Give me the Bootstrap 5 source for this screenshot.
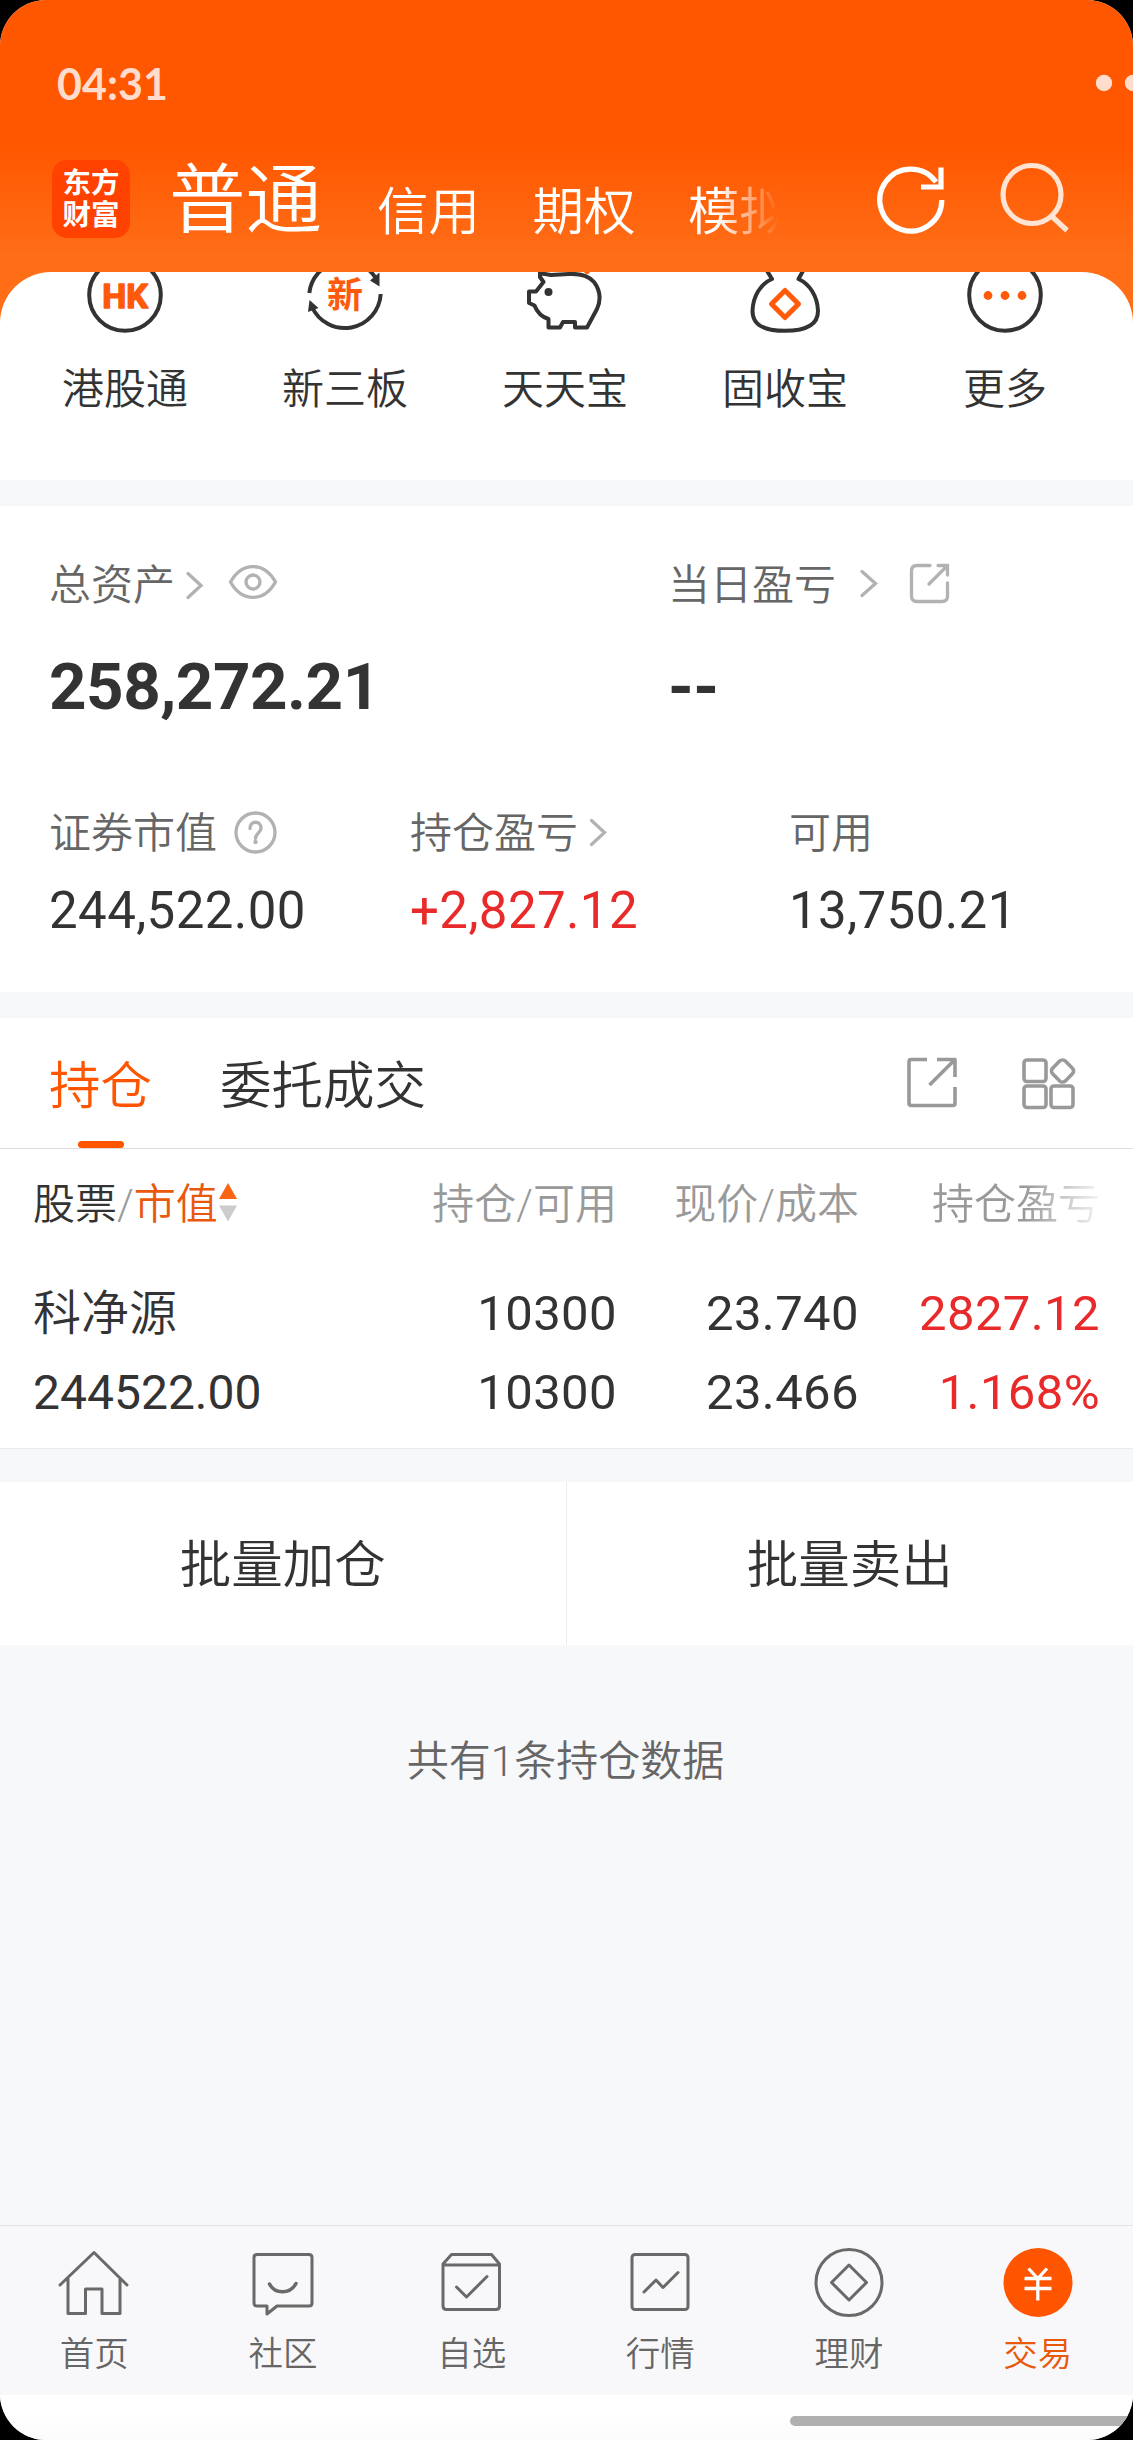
<!DOCTYPE html>
<html lang="zh-CN">
<head>
<meta charset="utf-8">
<meta name="viewport" content="width=device-width, initial-scale=1">
<title>东方财富 交易</title>
<link href="https://cdn.jsdelivr.net/npm/bootstrap@5.3.0/dist/css/bootstrap.min.css" rel="stylesheet">
<style>
  :root { --brand: #ff5500; --ink: #333; --sub: #666; --mute: #999; --up: #e92a2a; }
  html, body { background: #000; }
  body { font-family: Roboto, "Noto Sans CJK SC", sans-serif; font-weight: 350; color: var(--ink); line-height: 60px; margin: 0; }
  svg { display: block; flex: none; fill: none; overflow: visible; }
  .phone { width: 1133px; height: 2440px; border-radius: 46px; background: #f7f8fa; overflow: hidden; }
  .top-area { height: 322px; margin-bottom: -50px; flex: none; background: linear-gradient(#ff5700 0, #ff5700 145px, #ff6d17 255px, #ff6d17 100%); color: #fff; }
  .status { height: 147px; padding: 20px 0 0 57px; color: #ffdccc; }
  .clock { font: 700 43px/60px Lato, sans-serif; letter-spacing: 0; margin-top: 34px; }
  .title-row { height: 125px; padding-left: 52px; }
  .logo { width: 78px; height: 78px; margin-top: 13px; border-radius: 15px; background: #ff4200; font: 700 28.5px/32px "Noto Sans CJK SC", sans-serif; padding-top: 5px; }
  .t-main { font-size: 76.5px; line-height: 90px; margin: 9px 0 0 39px; width: 155px; }
  .t-list { width: 420px; margin: 36px 0 0 53px; font-size: 51.5px; gap: 52.5px; overflow: hidden; -webkit-mask-image: linear-gradient(90deg, #000 340px, transparent 402px); mask-image: linear-gradient(90deg, #000 340px, transparent 402px); }
  .panel { background: #fff; flex: none; }
  .quick { height: 208px; border-radius: 51px 51px 0 0; padding: 0 16px 0 15px; }
  .quick .item { width: 220px; font-size: 42px; }
  .quick .cap { margin-top: 25px; }
  .assets { height: 486px; margin-top: 26px; padding: 50px 0 0 49px; }
  .lab { font-size: 42px; color: var(--sub); }
  .lab svg { margin-left: -1px; }
  .big { font: 700 65.5px/80px Roboto, sans-serif; margin-top: 31px; margin-bottom: -1px; letter-spacing: -.5px; }
  .mid { font-size: 51px; font-weight: 400; margin-top: 17px; letter-spacing: .4px; }
  .w1 { width: 619px; } .w2 { width: 361px; } .w3 { width: 379px; }
  .holdings { height: 431px; margin-top: 26px; border-bottom: 1px solid #ebebeb; }
  .tabs { height: 131px; border-bottom: 1px solid #ddd; padding-left: 49px; font-size: 51.5px; }
  .tab-on { color: var(--brand); }
  .tab-on .bar { width: 46px; height: 7px; border-radius: 4px; background: var(--brand); }
  .thead-line { padding: 26px 0 0 33px; font-size: 42px; color: var(--mute); }
  .data-line { padding-left: 33px; font-size: 49px; font-weight: 400; }
  .c1 { width: 342px; } .c2 { width: 242px; text-align: right; } .c4 { width: 241px; text-align: right; }
  .data-line .c2, .data-line .c4 { letter-spacing: .4px; }
  .fade-end { -webkit-mask-image: linear-gradient(90deg, #000 165px, transparent 250px); mask-image: linear-gradient(90deg, #000 165px, transparent 250px); }
  .up { color: var(--up); }
  .batch { height: 163px; margin-top: 33px; font-size: 51.5px; }
  .batch > div { padding-top: 5px; }
  .batch > div:first-child { border-right: 1px solid #ebebeb; }
  .summary { font-size: 42px; color: var(--sub); margin-top: 87px; padding-right: 2px; }
  .tabbar { height: 170px; flex: none; border-top: 1px solid #e1e4e6; background: #f8f8fa; font-size: 34.5px; line-height: 40px; color: var(--sub); padding: 16px 1px 0 0; }
  .tabbar span { margin-top: 12px; }
  .tabbar svg { stroke: #696969; stroke-width: 3; stroke-linejoin: round; stroke-linecap: round; }
  .gesture { height: 45px; flex: none; background: linear-gradient(#fff 40%, #fbfbfb); padding: 21px 0 0 790px; }
  .gesture div { height: 10px; background: #b0b0b0; border-radius: 5px 0 0 5px; }
</style>
</head>
<body>
<div class="phone d-flex flex-column">
  <header class="top-area">
    <div class="status d-flex justify-content-between align-items-start">
      <span class="clock">04:31</span>
      <svg width="40" height="16" viewBox="0 0 40 16" style="margin-top:55px"><g fill="#ffdccc"><circle cx="11" cy="8" r="8.2"/><circle cx="40" cy="8" r="8.2"/></g></svg>
    </div>
    <div class="title-row d-flex align-items-start">
      <div class="logo text-center">东方<br>财富</div>
      <div class="t-main text-nowrap">普通</div>
      <div class="t-list d-flex text-nowrap"><span>信用</span><span>期权</span><span>模拟</span></div>
      <svg width="256" height="90" viewBox="877 156 256 90" class="ms-auto mt-2" stroke-width="5.2">
        <path d="M941.8 201 A31 31 0 1 1 936 183" stroke="#fff"/>
        <path d="M941 168.5V188H921" stroke="#fff"/>
        <circle cx="1032" cy="195.500" r="29" stroke="#ffe3d3"/>
        <path d="M1051.500 217 1067 231.500" stroke="#ffe3d3"/>
      </svg>
    </div>
  </header>

  <section class="panel quick d-flex position-relative">
    <div class="item d-flex flex-column align-items-center">
      <svg width="80" height="63" viewBox="0 17 80 63" style="overflow:hidden"><circle cx="40" cy="40" r="35.800" stroke="#333" stroke-width="4"/><text x="40" y="52.500" text-anchor="middle" font-size="34" font-weight="700" fill="#ff5a0a" stroke="#ff5a0a" stroke-width="1.500" stroke-linejoin="round" font-family="Roboto">HK</text></svg>
      <div class="cap">港股通</div>
    </div>
    <div class="item d-flex flex-column align-items-center">
      <svg width="80" height="63" viewBox="0 17 80 63" style="overflow:hidden"><path d="M4.300 38A36 36 0 0 1 70 22M75.700 39A36 36 0 0 1 7 52" stroke="#333" stroke-width="4"/><path d="M65 25.500 74.500 17.500 74.500 31.500ZM4.500 45 13.500 53 3 57Z" fill="#333"/><text x="40" y="52.500" text-anchor="middle" font-size="36" font-weight="700" fill="#ff5a0a" font-family="Noto Sans CJK SC">新</text></svg>
      <div class="cap">新三板</div>
    </div>
    <div class="item d-flex flex-column align-items-center">
      <svg width="80" height="63" viewBox="526 272 80 63" style="overflow:hidden"><path d="M541 268V277L544.500 282 537 291.500H530V303L535.500 305.500C538 312 543 317 549.500 319V327.500H561L564 322H576V327.500H588L598 309C602 300 601 290 595 282C589 275 580 273.500 570 274L552 275 540 273" stroke="#333" stroke-width="4" stroke-linejoin="round"/><circle cx="549.500" cy="292" r="4" fill="#333"/><circle cx="588" cy="271" r="3" fill="#ff5a0a"/></svg>
      <div class="cap">天天宝</div>
    </div>
    <div class="item d-flex flex-column align-items-center">
      <svg width="80" height="63" viewBox="745.500 272 80 63" style="overflow:hidden"><path d="M767 270 772.500 279C761 284 753.500 296 753 311C753 325 764 330.800 785.500 330.800S818.500 325 818.500 311C818 296 810 284 799 279L804 270" stroke="#333" stroke-width="4" stroke-linejoin="round"/><path d="M785.500 290.500 799 304 785.500 317.500 772 304Z" stroke="#ff5a0a" stroke-width="5" stroke-linejoin="round"/></svg>
      <div class="cap">固收宝</div>
    </div>
    <div class="item d-flex flex-column align-items-center">
      <svg width="80" height="63" viewBox="0 17 80 63" style="overflow:hidden"><circle cx="40" cy="40" r="35.800" stroke="#333" stroke-width="4"/><g fill="#ff5a0a"><circle cx="23" cy="40.500" r="4.400"/><circle cx="40" cy="40.500" r="4.400"/><circle cx="57" cy="40.500" r="4.400"/></g></svg>
      <div class="cap">更多</div>
    </div>
  </section>

  <section class="panel assets">
    <div class="d-flex">
      <div class="w1">
        <div class="lab d-flex">总资产
          <svg width="120" height="60" viewBox="174 556 120 60" stroke="#b2b2b2" stroke-width="3.300" stroke-linecap="round"><path d="M188 573.500 201 585.500 188 597.500"/><path d="M230.500 582C242 561.500 264 561.500 275.500 582C264 602.500 242 602.500 230.500 582Z"/><circle cx="253" cy="582" r="7"/></svg>
        </div>
        <div class="big">258,272.21</div>
      </div>
      <div>
        <div class="lab d-flex">当日盈亏
          <svg width="120" height="60" viewBox="835 556 120 60" stroke="#b2b2b2" stroke-width="3.300" stroke-linecap="round"><path d="M862 571.500 875.500 583.500 862 595.500"/><path d="M930 565.500H917Q911.500 565.500 911.500 571V596Q911.500 601.500 917 601.500H942Q947.500 601.500 947.500 596V583M938 565.500H947.500V575M947 566 929 584"/></svg>
        </div>
        <div class="big">--</div>
      </div>
    </div>
    <div class="d-flex" style="margin-top:78px">
      <div class="w2">
        <div class="lab d-flex">证券市值
          <svg width="70" height="60" viewBox="216 804 70 60" stroke="#b2b2b2" stroke-width="3.300" stroke-linecap="round"><circle cx="255.500" cy="832.500" r="19.500"/><path d="M250 828.500C250 820 261 820.500 261 828C261 833 255.500 833 255.500 838.500"/><circle cx="255.500" cy="842" r="2.200" fill="#b2b2b2" stroke="none"/></svg>
        </div>
        <div class="mid">244,522.00</div>
      </div>
      <div class="w3">
        <div class="lab d-flex">持仓盈亏
          <svg width="40" height="60" viewBox="577 804 40 60" stroke="#b2b2b2" stroke-width="3.300" stroke-linecap="round"><path d="M591.500 820.500 604.500 832.500 591.500 844.500"/></svg>
        </div>
        <div class="mid up">+2,827.12</div>
      </div>
      <div>
        <div class="lab">可用</div>
        <div class="mid">13,750.21</div>
      </div>
    </div>
  </section>

  <section class="panel holdings">
    <div class="tabs d-flex">
      <div class="tab-on d-flex flex-column align-items-center"><span style="margin-top:39px">持仓</span><div class="bar mt-auto"></div></div>
      <div style="margin:39px 0 0 68px">委托成交</div>
      <svg width="232" height="130" viewBox="901 1018 232 130" class="ms-auto" stroke="#999" stroke-width="3.600" stroke-linejoin="round"><path d="M927 1059.500H911Q909 1059.500 909 1062V1103Q909 1105.500 911.500 1105.500H953Q955 1105.500 955 1103.500V1087M937 1059.500H955V1077M954.500 1060 929.500 1085"/><rect x="1024" y="1060" width="22" height="21.500" rx="3"/><rect x="1024" y="1086" width="22" height="21.500" rx="3"/><rect x="1051" y="1086" width="22" height="21.500" rx="3"/><rect x="1053.500" y="1062" width="18" height="18" rx="4" transform="rotate(45 1062.500 1071)"/></svg>
    </div>
    <div class="thead-line d-flex">
      <div class="c1 d-flex"><span style="color:#333">股票</span><span>/</span><span style="color:#e8590c">市值</span><svg width="20" height="60" viewBox="0 0 20 60"><path d="M10 8 19 24H1Z" fill="#fa6414"/><path d="M1 30.500H19L10 46.500Z" fill="#ccc"/></svg></div>
      <div class="c2">持仓/可用</div><div class="c2">现价/成本</div><div class="c4 fade-end">持仓盈亏</div>
    </div>
    <div class="data-line d-flex" style="margin-top:49px">
      <div class="c1" style="font-size:48px;font-weight:350">科净源</div><div class="c2">10300</div><div class="c2">23.740</div><div class="c4 up">2827.12</div>
    </div>
    <div class="data-line d-flex" style="margin-top:19px">
      <div class="c1" style="font-size:48px">244522.00</div><div class="c2">10300</div><div class="c2">23.466</div><div class="c4 up">1.168%</div>
    </div>
  </section>

  <section class="panel batch d-flex text-center">
    <div class="w-50 d-flex align-items-center justify-content-center">批量加仓</div>
    <div class="w-50 d-flex align-items-center justify-content-center">批量卖出</div>
  </section>

  <div class="summary text-center">共有1条持仓数据</div>

  <nav class="tabbar d-flex mt-auto">
    <div class="w-100 d-flex flex-column align-items-center">
      <svg width="80" height="80" viewBox="54 2242 80 80"><path d="M60 2285 94 2252.500 127 2285M68 2279V2313.500H85.500V2289H102V2313.500H120V2279"/></svg><span>首页</span></div>
    <div class="w-100 d-flex flex-column align-items-center">
      <svg width="80" height="80" viewBox="243 2242 80 80"><path d="M257 2254.500H309Q312 2254.500 312 2257.500V2303Q312 2306 309 2306H277L267 2314V2306H257Q254 2306 254 2303V2257.500Q254 2254.500 257 2254.500Z"/><path d="M269.500 2284C275 2294.500 290 2294.500 296 2283.500" stroke-width="3.500"/></svg><span>社区</span></div>
    <div class="w-100 d-flex flex-column align-items-center">
      <svg width="80" height="80" viewBox="432 2242 80 80"><path d="M451.500 2254.500H491.500L499.500 2264V2306Q499.500 2309.500 496 2309.500H446.500Q443 2309.500 443 2306V2264ZM443 2265H499.500M456.500 2287 466.500 2297 487 2276.500"/></svg><span>自选</span></div>
    <div class="w-100 d-flex flex-column align-items-center">
      <svg width="80" height="80" viewBox="620.500 2242 80 80"><rect x="632.500" y="2254.500" width="56" height="55" rx="3"/><path d="M644.500 2292 656.500 2280 663.500 2287.500 678.500 2272.500"/></svg><span>行情</span></div>
    <div class="w-100 d-flex flex-column align-items-center">
      <svg width="80" height="80" viewBox="809.500 2242 80 80"><circle cx="849.500" cy="2282.500" r="33"/><path d="M849.500 2265 867 2282.500 849.500 2300 832 2282.500Z"/></svg><span>理财</span></div>
    <div class="w-100 d-flex flex-column align-items-center" style="color:#e8590c">
      <svg width="80" height="80" viewBox="998.500 2242 80 80"><circle cx="1038.500" cy="2282.500" r="34.500" fill="#ff5500" stroke="none"/><path d="M1029 2268.500 1038.300 2278.500 1047.500 2268.500M1025 2278.500H1052M1025 2288.500H1052M1038.300 2278.500V2300.500" stroke="#fff" stroke-width="3.300" stroke-linecap="butt"/></svg><span>交易</span></div>
  </nav>
  <div class="gesture"><div></div></div>
</div>
<script src="https://cdn.jsdelivr.net/npm/bootstrap@5.3.0/dist/js/bootstrap.bundle.min.js"></script>
</body>
</html>
